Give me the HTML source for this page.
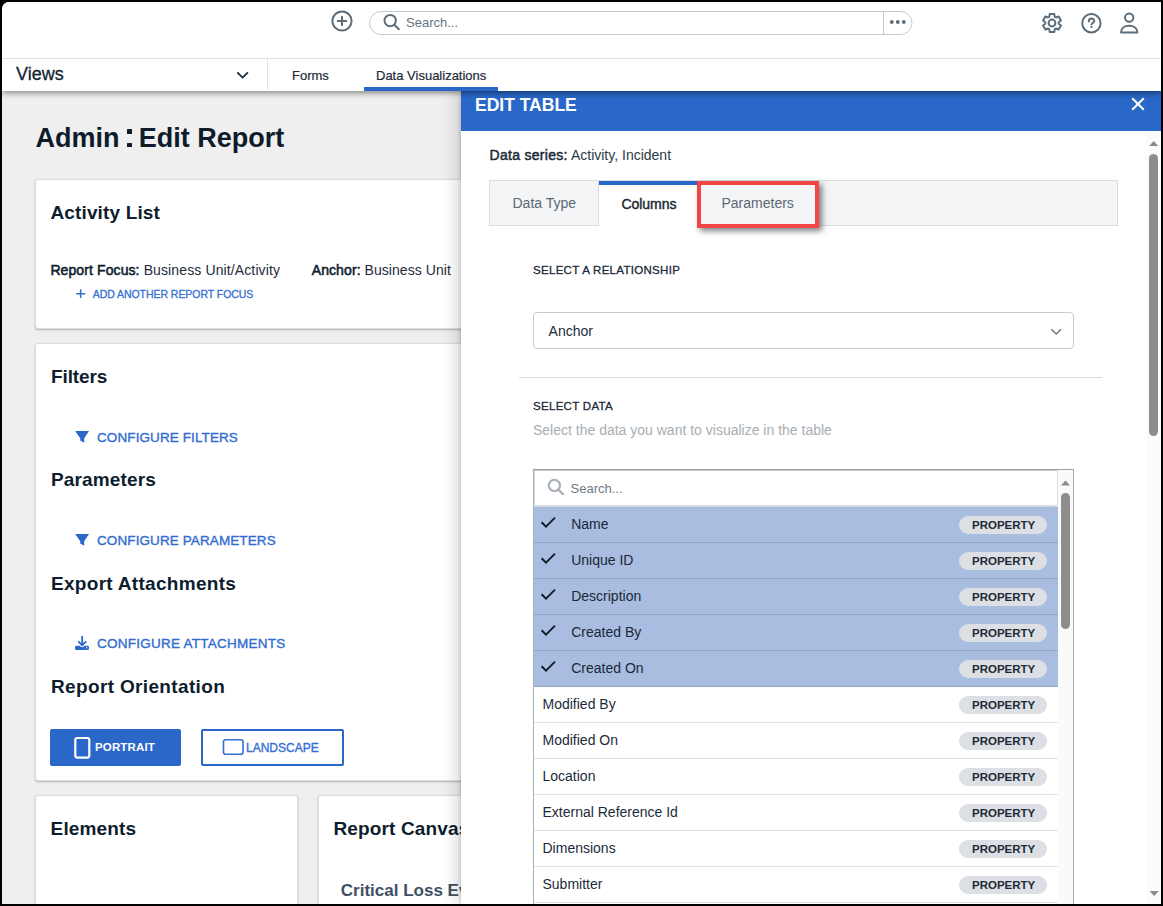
<!DOCTYPE html>
<html><head><meta charset="utf-8">
<style>
*{box-sizing:border-box;margin:0;padding:0}
html,body{width:1163px;height:906px;overflow:hidden;background:#000;font-family:"Liberation Sans",sans-serif}
#pg{position:absolute;left:2px;top:2px;width:1159px;height:902px;background:#efefef;overflow:hidden;border-top-left-radius:7px}
.a{position:absolute;white-space:nowrap;line-height:1}
.hd{position:absolute;left:0;top:0;width:1159px;height:57px;background:#fff;border-bottom:1px solid #dde3e8}
.nav{position:absolute;left:0;top:57px;width:1159px;height:32px;background:#fff;box-shadow:0 2px 6px rgba(0,0,0,.45);z-index:6;clip-path:inset(0 -20px -20px -20px)}
.card{position:absolute;background:#fff;border:1px solid #d9dde1;border-radius:3px;box-shadow:0 1px 2px rgba(0,0,0,.26)}
.h2{font-size:19px;font-weight:700;color:#0e1d2e;letter-spacing:0.15px}
.lnk{font-size:13.5px;color:#2f6cd0;-webkit-text-stroke:0.35px #2f6cd0;letter-spacing:0.1px}
#panel{position:absolute;left:459px;top:89px;width:700px;height:813px;background:#fff;z-index:5;box-shadow:-1px 0 3px rgba(0,0,0,.14),-4px 0 16px rgba(0,0,0,.17)}
.ph{position:absolute;left:0;top:0;width:700px;height:40px;background:#2968c8}
.tabs{position:absolute;left:28px;top:89px;width:629px;height:46px;background:#f4f5f7;border:1px solid #d9dde1}
.tab{position:absolute;top:0;height:44px}
.lbl{font-size:11.5px;color:#1c2a38;-webkit-text-stroke:0.3px #1c2a38;letter-spacing:0.3px}
.lst{position:absolute;left:72px;top:377.5px;width:540.5px;height:440px;border:1px solid #a6aeb6;border-top-color:#9aa0a6;box-shadow:inset 0 1px 0 #c5c9cd,inset 1px 0 0 #d9dcdf;background:#fff;overflow:hidden}
.srch{position:absolute;left:0;top:0;width:524px;height:36px;border:1px solid #dcdfe2;border-top:none;border-left:none;border-radius:0 0 3px 0}
.row{position:absolute;left:0;width:524px;height:36px;border-top:1px solid #dfe3e7;background:#fff}
.row.sel{background:#a8bddf;border-top-color:#93a7c5}
.row.sel+.row:not(.sel){border-top-color:#93a7c5}
.chk{position:absolute;left:4.7px;top:5.7px}
.rt{top:10.1px;font-size:14px;color:#1d2b3a}
.sel .rt{color:#1a2838}
.bdg{position:absolute;left:425px;top:9px;width:88px;height:18px;border-radius:9px;background:#dcdfe3}
.bdg span{position:absolute;left:13px;top:4.1px;font-size:11.5px;font-weight:700;color:#1e2a36;line-height:1;letter-spacing:0}
.isb{position:absolute;left:524px;top:0;width:16px;height:440px;background:#fafafa}
.isb svg{position:absolute;left:0;top:0}
.ith{position:absolute;left:3px;top:23.5px;width:9px;height:136px;border-radius:4.5px;background:#8d8d8d}
.psb{position:absolute;left:685px;top:40px;width:15px;height:773px;background:#fcfcfc}
.psb svg{position:absolute;left:0;top:-40px}
.pth{position:absolute;left:3px;top:23px;width:9px;height:282px;border-radius:4.5px;background:#8d8d8d}
</style></head><body>
<div id="pg">
  <!-- header -->
  <div class="hd">
    <svg style="position:absolute;left:0;top:0" width="1159" height="57" viewBox="2 2 1159 57">
      <g fill="none" stroke="#5d6d7a" stroke-width="2" stroke-linecap="round" stroke-linejoin="round">
        <circle cx="342" cy="21" r="9.6"/>
        <path d="M342 16.7v8.6M337.7 21h8.6"/>
        <circle cx="390.2" cy="20.6" r="5.7"/>
        <path d="M394.4 24.8l4.4 4.5"/>
        <circle cx="1052" cy="23" r="3.4"/>
        <path d="M1049.23 16.79 L1049.75 13.98 L1054.25 13.98 L1054.77 16.79 L1056.00 17.50 L1058.69 16.54 L1060.94 20.44 L1058.76 22.29 L1058.76 23.71 L1060.94 25.56 L1058.69 29.46 L1056.00 28.50 L1054.77 29.21 L1054.25 32.02 L1049.75 32.02 L1049.23 29.21 L1048.00 28.50 L1045.31 29.46 L1043.06 25.56 L1045.24 23.71 L1045.24 22.29 L1043.06 20.44 L1045.31 16.54 L1048.00 17.50Z"/>
        <circle cx="1091.4" cy="23.2" r="9.2"/>
        <path d="M1088.8 21.4c0-1.7 1.2-2.8 2.7-2.8s2.7 1 2.7 2.5c0 1.3-0.9 1.8-1.6 2.1-0.7 0.35-1.1 0.7-1.1 1.3"/>
        <circle cx="1129.2" cy="17.6" r="4.2"/>
        <path d="M1121 32.4c0-4.3 3.7-6.7 8.2-6.7s8.2 2.4 8.2 6.7z"/>
      </g>
      <circle cx="1091.4" cy="27.1" r="1.15" fill="#5d6d7a"/>
      <rect x="369.5" y="11.5" width="542.5" height="23" rx="11.5" fill="none" stroke="#c4c9cd" stroke-width="1"/>
      <path d="M883.5 11.5v23" stroke="#c4c9cd" stroke-width="1"/>
      <circle cx="891.8" cy="22" r="1.9" fill="#5d6d7a"/><circle cx="897.8" cy="22" r="1.9" fill="#5d6d7a"/><circle cx="903.8" cy="22" r="1.9" fill="#5d6d7a"/>
    </svg>
    <div class="a" style="left:404px;top:14px;font-size:13px;color:#66737f">Search...</div>
  </div>
  <div class="nav">
    <div class="a" style="left:14px;top:6.2px;font-size:18px;color:#132436;-webkit-text-stroke:0.3px #132436">Views</div>
    <svg style="position:absolute;left:0;top:0" width="300" height="32" viewBox="2 59 300 32"><path d="M237.3 72.4l5.3 5.2 5.3-5.2" fill="none" stroke="#1a2a38" stroke-width="1.8"/></svg>
    <div style="position:absolute;left:265px;top:0;width:1px;height:31px;background:#dde2e6"></div>
    <div class="a" style="left:290px;top:10px;font-size:13px;color:#1d2b3a;-webkit-text-stroke:0.2px #1d2b3a">Forms</div>
    <div class="a" style="left:374px;top:10px;font-size:13px;color:#1d2b3a;-webkit-text-stroke:0.2px #1d2b3a">Data Visualizations</div>
    <div style="position:absolute;left:362px;top:28px;width:134px;height:4px;background:#2a67c8"></div>
  </div>

  <!-- content -->
  <div class="a" style="left:33.4px;top:122.6px;font-size:27px;font-weight:700;color:#0d1b2a">Admin</div>
  <div style="position:absolute;left:125.2px;top:127.4px;width:4.6px;height:4.4px;background:#0d1b2a;border-radius:0.6px"></div><div style="position:absolute;left:125.2px;top:141px;width:4.6px;height:4.2px;background:#0d1b2a;border-radius:0.6px"></div>
  <div class="a" style="left:136.8px;top:122.6px;font-size:27px;font-weight:700;color:#0d1b2a">Edit Report</div>

  <div class="card" style="left:33px;top:177px;width:600px;height:150px"></div>
  <div class="card" style="left:33px;top:341px;width:600px;height:438px"></div>
  <div class="card" style="left:33px;top:793px;width:263px;height:200px"></div>
  <div class="card" style="left:315.5px;top:793px;width:300px;height:200px"></div>

  <div class="a h2" style="left:48.4px;top:200.7px">Activity List</div>
  <div class="a" style="left:48.4px;top:260.6px;font-size:14px;color:#1d2b3a;letter-spacing:0.12px"><span class="sb" style="color:#0e1d2e;-webkit-text-stroke:0.55px #0e1d2e;letter-spacing:0.1px">Report Focus:</span> Business Unit/Activity</div>
  <div class="a" style="left:309.7px;top:260.6px;font-size:14px;color:#1d2b3a;letter-spacing:0.05px"><span class="sb" style="color:#0e1d2e;-webkit-text-stroke:0.55px #0e1d2e;letter-spacing:0.1px">Anchor:</span> Business Unit</div>
  <svg style="position:absolute;left:0;top:0;overflow:visible" width="1" height="1" viewBox="2 2 1 1">
    <path d="M80.65 289.2v8.8M76.2 293.8h8.9" stroke="#3570d2" stroke-width="1.5" fill="none"/>
    <path d="M75.2 431H89L84.2 438.3V442.7L80.2 440.6V438.3Z" fill="#2a67c8"/>
    <path d="M75.2 534H89L84.2 541.3V545.7L80.2 543.6V541.3Z" fill="#2a67c8"/>
    <path d="M82.2 636v9M78.2 641.3l4 4 4-4" stroke="#2a67c8" stroke-width="1.8" fill="none"/>
    <path d="M76.5 645.8H79.6Q82.2 648.6 84.8 645.8H87.5Q89 645.8 89 647.3V648.5Q89 650 87.5 650H76.5Q75 650 75 648.5V647.3Q75 645.8 76.5 645.8Z" fill="#2a67c8"/>
    <circle cx="86.6" cy="647.8" r="0.7" fill="#fff"/>
  </svg>
  <div class="a" style="left:90.7px;top:287.1px;font-size:10.5px;color:#3570d2;letter-spacing:-0.05px;-webkit-text-stroke:0.3px #3570d2">ADD ANOTHER REPORT FOCUS</div>

  <div class="a h2" style="left:49px;top:364.7px;letter-spacing:-0.1px">Filters</div>
  <div class="a lnk" style="left:95px;top:428.6px">CONFIGURE FILTERS</div>
  <div class="a h2" style="left:49px;top:468.3px">Parameters</div>
  <div class="a lnk" style="left:95px;top:531.6px">CONFIGURE PARAMETERS</div>
  <div class="a h2" style="left:49px;top:571.5px;letter-spacing:0.3px">Export Attachments</div>
  <div class="a lnk" style="left:95px;top:634.8px;letter-spacing:0.25px">CONFIGURE ATTACHMENTS</div>
  <div class="a h2" style="left:49px;top:674.9px;letter-spacing:0.35px">Report Orientation</div>

  <div style="position:absolute;left:48px;top:727px;width:131px;height:37px;background:#2a67c8;border-radius:2px">
    <svg style="position:absolute;left:0;top:0" width="131" height="36" viewBox="50 729 131 36"><rect x="75.3" y="738" width="14" height="19.6" rx="2" fill="none" stroke="#fff" stroke-width="2.2"/></svg>
    <div class="a" style="left:45px;top:12.8px;font-size:11.5px;font-weight:700;color:#fff;letter-spacing:0.15px">PORTRAIT</div>
  </div>
  <div style="position:absolute;left:199px;top:727px;width:143px;height:37px;background:#fff;border:2px solid #2a67c8;border-radius:2px">
    <svg style="position:absolute;left:-2px;top:-2px" width="143" height="37" viewBox="201 729 143 37"><rect x="223.5" y="739.8" width="19.5" height="14.5" rx="2" fill="none" stroke="#3570d2" stroke-width="1.6"/></svg>
    <div class="a" style="left:43px;top:11px;font-size:12px;color:#3570d2;-webkit-text-stroke:0.35px #3570d2">LANDSCAPE</div>
  </div>

  <div class="a h2" style="left:48.6px;top:816.9px">Elements</div>
  <div class="a h2" style="left:331.4px;top:816.5px">Report Canvas</div>
  <div class="a" style="left:338.8px;top:879.8px;font-size:17px;font-weight:700;color:#3e5063">Critical Loss Events</div>

  <div id="panel">
    <div class="ph">
      <div class="a" style="left:14px;top:6.3px;font-size:17.5px;font-weight:700;color:#fff">EDIT TABLE</div>
      <svg style="position:absolute;left:669px;top:5px" width="16" height="16" viewBox="0 0 16 16"><path d="M2.2 2.2l11.6 11.6M13.8 2.2L2.2 13.8" stroke="#fff" stroke-width="2.1"/></svg>
    </div>
    <div class="a" style="left:28.5px;top:56.8px;font-size:14px;color:#2c3a48"><span style="color:#1c2a38;-webkit-text-stroke:0.5px #1c2a38;letter-spacing:0.3px">Data series:</span> Activity, Incident</div>
    <div class="tabs">
      <div class="tab" style="left:0;width:109px;border-right:1px solid #d9dde1"><div class="a" style="left:22.5px;top:15.2px;font-size:14px;color:#5b6774">Data Type</div></div>
      <div class="tab" style="left:109px;width:98px;background:#fff;top:0;height:45px"><div style="position:absolute;left:0;top:0;width:98px;height:4px;background:#2968c8"></div><div class="a" style="left:22.5px;top:15.9px;font-size:14px;color:#1c2a38;-webkit-text-stroke:0.45px #1c2a38;letter-spacing:-0.05px">Columns</div></div>
      <div class="tab" style="left:207px;width:122px"><div class="a" style="left:24.5px;top:15.2px;font-size:14px;color:#5b6774">Parameters</div></div>
    </div>
    <div style="position:absolute;left:235.7px;top:89.5px;width:122.5px;height:47px;border:4.5px solid #f34446;box-shadow:3px 3px 6px rgba(0,0,0,.5)"></div>
    <div class="a lbl" style="left:72px;top:173.6px">SELECT A RELATIONSHIP</div>
    <div style="position:absolute;left:72px;top:221px;width:540.5px;height:36.5px;border:1px solid #c9cccf;border-radius:4px;background:#fff">
      <div class="a" style="left:14.6px;top:10.9px;font-size:14px;color:#1d2b3a">Anchor</div>
      <svg style="position:absolute;left:509.5px;top:9.6px" width="20" height="16" viewBox="0 0 20 16"><path d="M7.4 6.2l4.8 4.8 4.8-4.8" fill="none" stroke="#6b7885" stroke-width="1.5"/></svg>
    </div>
    <div style="position:absolute;left:58px;top:286px;width:583px;height:1px;background:#d5dbe0"></div>
    <div class="a lbl" style="left:72px;top:309.9px">SELECT DATA</div>
    <div class="a" style="left:72px;top:331.8px;font-size:14px;color:#a7aeb5">Select the data you want to visualize in the table</div>
    <div class="lst">
      <div class="srch">
        <svg style="position:absolute;left:0;top:0" width="40" height="36" viewBox="0 0 40 36"><circle cx="20.4" cy="15.4" r="5.6" fill="none" stroke="#a9b0b7" stroke-width="2.2"/><path d="M24.5 19.6l4.4 4.5" stroke="#a9b0b7" stroke-width="2.3" stroke-linecap="round"/></svg>
        <div class="a" style="left:36.5px;top:12.2px;font-size:13px;color:#6f7a85">Search...</div>
      </div>
<div class="row sel" style="top:36px;border-top-color:#d3d7db"><svg class="chk" width="20" height="20" viewBox="0 0 20 20"><path d="M2.6 10.2l4.4 4.4 9-9" fill="none" stroke="#0f1d2c" stroke-width="2"/></svg><div class="a rt" style="left:37.2px">Name</div><div class="bdg"><span>PROPERTY</span></div></div>
<div class="row sel" style="top:72px"><svg class="chk" width="20" height="20" viewBox="0 0 20 20"><path d="M2.6 10.2l4.4 4.4 9-9" fill="none" stroke="#0f1d2c" stroke-width="2"/></svg><div class="a rt" style="left:37.2px">Unique ID</div><div class="bdg"><span>PROPERTY</span></div></div>
<div class="row sel" style="top:108px"><svg class="chk" width="20" height="20" viewBox="0 0 20 20"><path d="M2.6 10.2l4.4 4.4 9-9" fill="none" stroke="#0f1d2c" stroke-width="2"/></svg><div class="a rt" style="left:37.2px">Description</div><div class="bdg"><span>PROPERTY</span></div></div>
<div class="row sel" style="top:144px"><svg class="chk" width="20" height="20" viewBox="0 0 20 20"><path d="M2.6 10.2l4.4 4.4 9-9" fill="none" stroke="#0f1d2c" stroke-width="2"/></svg><div class="a rt" style="left:37.2px">Created By</div><div class="bdg"><span>PROPERTY</span></div></div>
<div class="row sel" style="top:180px"><svg class="chk" width="20" height="20" viewBox="0 0 20 20"><path d="M2.6 10.2l4.4 4.4 9-9" fill="none" stroke="#0f1d2c" stroke-width="2"/></svg><div class="a rt" style="left:37.2px">Created On</div><div class="bdg"><span>PROPERTY</span></div></div>
<div class="row" style="top:216px"><div class="a rt" style="left:8.5px">Modified By</div><div class="bdg"><span>PROPERTY</span></div></div>
<div class="row" style="top:252px"><div class="a rt" style="left:8.5px">Modified On</div><div class="bdg"><span>PROPERTY</span></div></div>
<div class="row" style="top:288px"><div class="a rt" style="left:8.5px">Location</div><div class="bdg"><span>PROPERTY</span></div></div>
<div class="row" style="top:324px"><div class="a rt" style="left:8.5px">External Reference Id</div><div class="bdg"><span>PROPERTY</span></div></div>
<div class="row" style="top:360px"><div class="a rt" style="left:8.5px">Dimensions</div><div class="bdg"><span>PROPERTY</span></div></div>
<div class="row" style="top:396px"><div class="a rt" style="left:8.5px">Submitter</div><div class="bdg"><span>PROPERTY</span></div></div>
<div class="row" style="top:432px"><div class="a rt" style="left:8.5px">Status</div><div class="bdg"><span>PROPERTY</span></div></div>
      <div class="isb"><svg width="15" height="20" viewBox="0 0 15 20"><path d="M3 15.5h9l-4.5-5z" fill="#8a8a8a"/></svg><div class="ith"></div></div>
    </div>
    <div class="psb"><svg width="15" height="813" viewBox="0 0 15 813"><path d="M3.2 55h9l-4.5-5z" fill="#8a8a8a"/><path d="M3.6 800h9.2l-4.6 5z" fill="#8a8a8a"/></svg><div class="pth"></div></div>
  </div>
</div>
</body></html>
